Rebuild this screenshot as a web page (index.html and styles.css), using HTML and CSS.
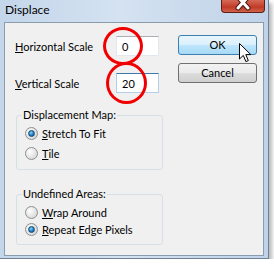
FILE: index.html
```html
<!DOCTYPE html>
<html lang="en">
<head>
    <meta charset="UTF-8">
    <title>Displace</title>
    <link rel="stylesheet" href="styles.css">
</head>
<body>
    <div class="window">
        <div class="titlebar">
            <span class="title">Displace</span>
            <div class="close">
                <svg width="16" height="12" viewBox="0 0 16 12">
                    <path d="M3 -3 L13 8 M13 -3 L3 8" stroke="#4a1a14" stroke-width="5" stroke-linecap="round"/>
                    <path d="M3 -3 L13 8 M13 -3 L3 8" stroke="#ffffff" stroke-width="3" stroke-linecap="round"/>
                </svg>
            </div>
        </div>
        <div class="client">
            <div class="left">
                <div class="field">
                    <label><u>H</u>orizontal Scale</label>
                    <div class="input">0</div>
                </div>
                <div class="field">
                    <label><u>V</u>ertical Scale</label>
                    <div class="input focus">20</div>
                </div>
                <fieldset class="group group-map">
                    <legend>Displacement Map:</legend>
                    <div class="radio"><span class="dot checked"></span><span><u>S</u>tretch To Fit</span></div>
                    <div class="radio"><span class="dot"></span><span><u>T</u>ile</span></div>
                </fieldset>
                <fieldset class="group group-areas">
                    <legend>Undefined Areas:</legend>
                    <div class="radio"><span class="dot"></span><span><u>W</u>rap Around</span></div>
                    <div class="radio"><span class="dot checked"></span><span><u>R</u>epeat Edge Pixels</span></div>
                </fieldset>
            </div>
            <div class="buttons">
                <div class="btn hover">OK</div>
                <div class="btn">Cancel</div>
            </div>

            <span class="mark mark-h"></span>
            <span class="mark mark-v"></span>
            <svg class="cursor" width="13" height="20" viewBox="0 0 13 20">
                <path d="M0.5 0.5 L0.5 16 L4.3 12.4 L6.9 18.6 L9.3 17.6 L6.8 11.6 L11.8 11.6 Z" fill="#fff" stroke="#000" stroke-width="1" stroke-linejoin="miter"/>
            </svg>
        </div>
    </div>
</body>
</html>
```

FILE: styles.css
```css
body {
    margin: 0;
    background: #ffffff;
    font-family: Lato, 'Liberation Sans', sans-serif;
    font-size: 11px;
    color: #000;
}
.window {
    position: relative;
    width: 268px;
    height: 258px;
    background: linear-gradient(90deg, #c4d6ea 0%, #d4e2f1 45%, #c0d3e9 100%);
    border-right: 1px solid #6f8196;
    border-bottom: 1px solid #6f8196;
    box-shadow: 3px 3px 4px rgba(0, 0, 0, 0.28);
}
.titlebar {
    height: 22px;
    display: flex;
    justify-content: space-between;
    align-items: flex-start;
}
.title {
    font-size: 12px;
    padding: 2px 0 0 5px;
    color: #000;
}
.close {
    width: 42px;
    height: 12px;
    margin-right: 3px;
    border: 1px solid #5f1f16;
    border-top: none;
    border-radius: 0 0 4px 4px;
    background: linear-gradient(#d36a57, #c23a26 60%, #d0634b);
    display: flex;
    justify-content: center;
}
.client {
    position: relative;
    margin-left: 4px;
    width: 258px;
    height: 232px;
    background: #f0f0f0;
    border: 1px solid #8b9cad;
    display: flex;
}
.left {
    width: 168px;
    padding: 13px 0 0 10px;
    box-sizing: border-box;
}
.field {
    display: flex;
    align-items: center;
    height: 20px;
    margin-bottom: 17px;
}
.field + .field {
    margin-bottom: 15px;
}
.field label {
    width: 101px;
}
.input {
    width: 43px;
    height: 20px;
    box-sizing: border-box;
    background: #fff;
    border: 1px solid #e2e8ee;
    border-top-color: #abadb3;
    padding: 3px 0 0 5px;
}
.input.focus {
    border-color: #b5cfe7;
    border-top-color: #3d7bad;
}
.group {
    margin: 0 0 0 1px;
    width: 147px;
    box-sizing: border-box;
    border: 1px solid #d5dfe5;
    border-radius: 3px;
    padding: 4px 8px 0;
}
.group legend {
    padding: 0 1px;
    margin-left: -3px;
    line-height: 14px;
}
.group-map {
    height: 62px;
    margin-bottom: 17px;
}
.group-map .radio + .radio {
    margin-top: 6px;
}
.group-areas {
    height: 58px;
}
.group-areas .radio + .radio {
    margin-top: 3px;
}
.radio {
    display: flex;
    align-items: center;
    height: 14px;
    gap: 4px;
}
.dot {
    width: 13px;
    height: 13px;
    box-sizing: border-box;
    border-radius: 50%;
    border: 1px solid #8e8f8f;
    background: radial-gradient(circle at 35% 35%, #ffffff 0%, #e6e6e6 50%, #cfcfcf 100%);
    display: flex;
    align-items: center;
    justify-content: center;
}
.dot.checked::after {
    content: "";
    width: 5px;
    height: 5px;
    border-radius: 50%;
    background: radial-gradient(circle at 40% 35%, #8ad3f6 0%, #1f7ec4 55%, #0d4e86 100%);
    border: 1px solid #1b4a74;
}
.buttons {
    padding-top: 12px;
    margin-left: 5px;
    display: flex;
    flex-direction: column;
    gap: 8px;
}
.btn {
    width: 79px;
    height: 20px;
    box-sizing: border-box;
    border: 1px solid #707070;
    border-radius: 3px;
    background: linear-gradient(#f2f2f2 0%, #ebebeb 50%, #dddddd 51%, #cfcfcf 100%);
    text-align: center;
    line-height: 18px;
}
.btn.hover {
    border-color: #3c7fb1;
    background: linear-gradient(#eaf6fd 0%, #d9f0fc 50%, #bee6fd 51%, #a7d9f5 100%);
}
.mark {
    position: absolute;
    border: 3px solid #f00000;
    border-radius: 50%;
    box-sizing: border-box;
}
.mark-h {
    left: 98px;
    top: 4px;
    width: 40px;
    height: 38px;
}
.mark-v {
    left: 101px;
    top: 39px;
    width: 41px;
    height: 42px;
}
.cursor {
    position: absolute;
    left: 234px;
    top: 20px;
}
```
